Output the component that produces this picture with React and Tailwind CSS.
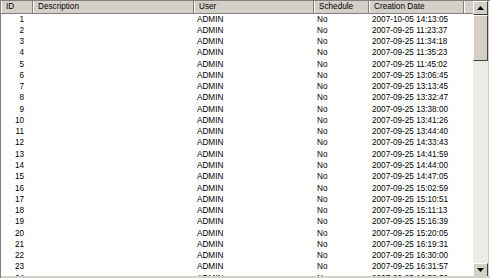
const times = [
  "2007-10-05 14:13:05", "2007-09-25 11:23:37", "2007-09-25 11:34:18", "2007-09-25 11:35:23",
  "2007-09-25 11:45:02", "2007-09-25 13:06:45", "2007-09-25 13:13:45", "2007-09-25 13:32:47",
  "2007-09-25 13:38:00", "2007-09-25 13:41:26", "2007-09-25 13:44:40", "2007-09-25 14:33:43",
  "2007-09-25 14:41:59", "2007-09-25 14:44:00", "2007-09-25 14:47:05", "2007-09-25 15:02:59",
  "2007-09-25 15:10:51", "2007-09-25 15:11:13", "2007-09-25 15:16:39", "2007-09-25 15:20:05",
  "2007-09-25 16:19:31", "2007-09-25 16:30:00", "2007-09-25 16:31:57", "2007-09-25 16:38:32",
];

function HeadCell({ w, label }) {
  return (
    <div className={`${w} h-full flex items-center pl-[4px] border-r border-r-[#808080] border-l border-l-white shrink-0`}>
      {label}
    </div>
  );
}

export default function App() {
  return (
    <div
      className="w-[490px] h-[278px] bg-white overflow-hidden relative border-l border-t border-[#808080] text-[8.2px] text-black"
      style={{ fontFamily: '"Liberation Sans", Arial, sans-serif' }}
    >
      <div className="flex h-full">
        <div className="w-[472px] h-full overflow-hidden flex flex-col">
          {/* header */}
          <div className="flex h-[13px] bg-[#d4d0c8] border-b border-[#808080] shrink-0">
            <HeadCell w="w-[32px]" label="ID" />
            <HeadCell w="w-[161px]" label="Description" />
            <HeadCell w="w-[120px]" label="User" />
            <HeadCell w="w-[55px]" label="Schedule" />
            <HeadCell w="w-[95px]" label="Creation Date" />
            <div className="flex-1 h-full border-l border-white" />
          </div>
          {/* rows */}
          <div className="flex flex-col">
            {times.map((t, i) => (
              <div key={i} className="flex h-[11.27px] items-center shrink-0 leading-none">
                <div className="w-[32px] text-right pr-[9px]">{i + 1}</div>
                <div className="w-[164px]" />
                <div className="w-[120px]">ADMIN</div>
                <div className="w-[55px]">No</div>
                <div className="w-[95px]">{t}</div>
              </div>
            ))}
          </div>
        </div>
        {/* scrollbar */}
        <div className="w-[16px] h-[276px] bg-[#ecebe6] flex flex-col border-r border-[#d4d0c8]">
          <div className="h-[14px] bg-[#d4d0c8] border border-t-white border-l-white border-r-[#404040] border-b-[#404040] flex items-center justify-center">
            <svg width="7" height="4" viewBox="0 0 7 4"><path d="M3.5 0 L7 4 L0 4 Z" fill="#000" /></svg>
          </div>
          <div className="h-[46px] bg-[#d4d0c8] border border-t-white border-l-white border-r-[#404040] border-b-[#404040]" />
          <div className="flex-1" />
          <div className="h-[14px] bg-[#d4d0c8] border border-t-white border-l-white border-r-[#404040] border-b-[#404040] flex items-center justify-center">
            <svg width="7" height="4" viewBox="0 0 7 4"><path d="M0 0 L7 0 L3.5 4 Z" fill="#000" /></svg>
          </div>
        </div>
      </div>
      <div className="absolute left-0 right-0 bottom-0 h-[2px] bg-[#d4d0c8]" />
    </div>
  );
}
